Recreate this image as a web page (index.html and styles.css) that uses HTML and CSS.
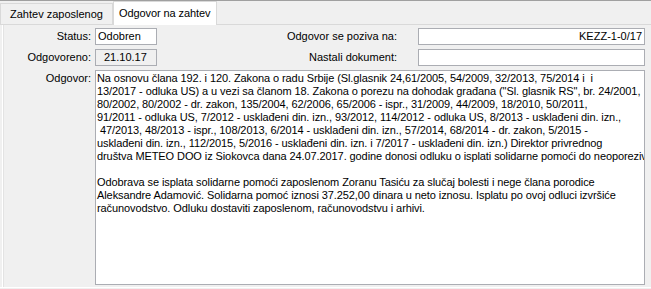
FILE: index.html
```html
<!DOCTYPE html>
<html lang="sr">
<head>
    <meta charset="UTF-8">
    <title>Odgovor na zahtev</title>
    <link rel="stylesheet" href="styles.css">
</head>
<body>
    <div class="tabs">
        <div class="tab">Zahtev zaposlenog</div>
        <div class="tab active">Odgovor na zahtev</div>
    </div>

    <div class="panel">
        <div class="form">
            <label class="lbl">Status:</label>
            <div class="field">Odobren</div>
            <label class="lbl">Odgovor se poziva na:</label>
            <div class="field right">KEZZ-1-0/17</div>

            <label class="lbl">Odgovoreno:</label>
            <div class="field readonly">21.10.17</div>
            <label class="lbl">Nastali dokument:</label>
            <div class="field"></div>

            <label class="lbl top">Odgovor:</label>
            <div class="memo">Na osnovu člana 192. i 120. Zakona o radu Srbije (Sl.glasnik 24,61/2005, 54/2009, 32/2013, 75/2014 i  i
13/2017 - odluka US) a u vezi sa članom 18. Zakona o porezu na dohodak građana ("Sl. glasnik RS", br. 24/2001,
80/2002, 80/2002 - dr. zakon, 135/2004, 62/2006, 65/2006 - ispr., 31/2009, 44/2009, 18/2010, 50/2011,
91/2011 - odluka US, 7/2012 - usklađeni din. izn., 93/2012, 114/2012 - odluka US, 8/2013 - usklađeni din. izn.,
 47/2013, 48/2013 - ispr., 108/2013, 6/2014 - usklađeni din. izn., 57/2014, 68/2014 - dr. zakon, 5/2015 -
usklađeni din. izn., 112/2015, 5/2016 - usklađeni din. izn. i 7/2017 - usklađeni din. izn.) Direktor privrednog
društva METEO DOO iz Siokovca dana 24.07.2017. godine donosi odluku o isplati solidarne pomoći do neoporezivog

Odobrava se isplata solidarne pomoći zaposlenom Zoranu Tasiću za slučaj bolesti i nege člana porodice
Aleksandre Adamović. Solidarna pomoć iznosi 37.252,00 dinara u neto iznosu. Isplatu po ovoj odluci izvršiće
računovodstvo. Odluku dostaviti zaposlenom, računovodstvu i arhivi.</div>
        </div>
    </div>
</body>
</html>
```

FILE: styles.css
```css
body {
    margin: 0;
    width: 651px;
    height: 289px;
    overflow: hidden;
    background-color: #f0f0f0;
    font-family: Tahoma, "Liberation Sans", Arial, sans-serif;
    font-size: 11px;
    color: #000;
    border-top: 1px solid #a0a0a0;
    box-sizing: border-box;
}
.tabs {
    display: flex;
    align-items: flex-end;
    height: 23px;
}
.tab {
    height: 21px;
    line-height: 20px;
    padding: 0 9px 0 9px;
    border: 1px solid #d9d9d9;
    border-bottom: none;
    box-sizing: border-box;
    background-color: #f0f0f0;
}
.tab.active {
    height: 24px;
    line-height: 22px;
    padding: 0 5px;
    margin-bottom: -1px;
    letter-spacing: -0.08px;
    background-color: #fff;
    position: relative;
    z-index: 1;
}
.panel {
    border-top: 1px solid #d9d9d9;
    border-bottom: 1px solid #fff;
    height: 264px;
    box-sizing: border-box;
    padding-left: 2px;
}
.form {
    height: 100%;
    box-sizing: border-box;
    border-left: 1px solid #fff;
    box-shadow: inset 1px 0 0 #e3e3e3;
    padding: 3px 6px 0 4px;
    display: grid;
    grid-template-columns: 84px 62px 1fr 227px;
    grid-template-rows: 17px 17px 1fr;
    column-gap: 4px;
    row-gap: 4px;
}
.lbl {
    text-align: right;
    line-height: 17px;
    white-space: nowrap;
}
.lbl:nth-of-type(2n) {
    margin-right: 17px;
}
.lbl.top {
    line-height: 14px;
    padding-top: 1px;
}
.field {
    background-color: #fff;
    border: 1px solid #abadb3;
    line-height: 15px;
    padding: 0 2px;
    white-space: nowrap;
    overflow: hidden;
}
.field.right {
    text-align: right;
}
.field.readonly {
    background-color: #f0f0f0;
    padding-left: 8px;
}
.memo {
    grid-column: 2 / 5;
    height: 215px;
    box-sizing: border-box;
    background-color: #fff;
    border: 1px solid #abadb3;
    padding: 1px 1px;
    line-height: 13px;
    letter-spacing: -0.09px;
    white-space: pre;
    overflow: hidden;
}
```
